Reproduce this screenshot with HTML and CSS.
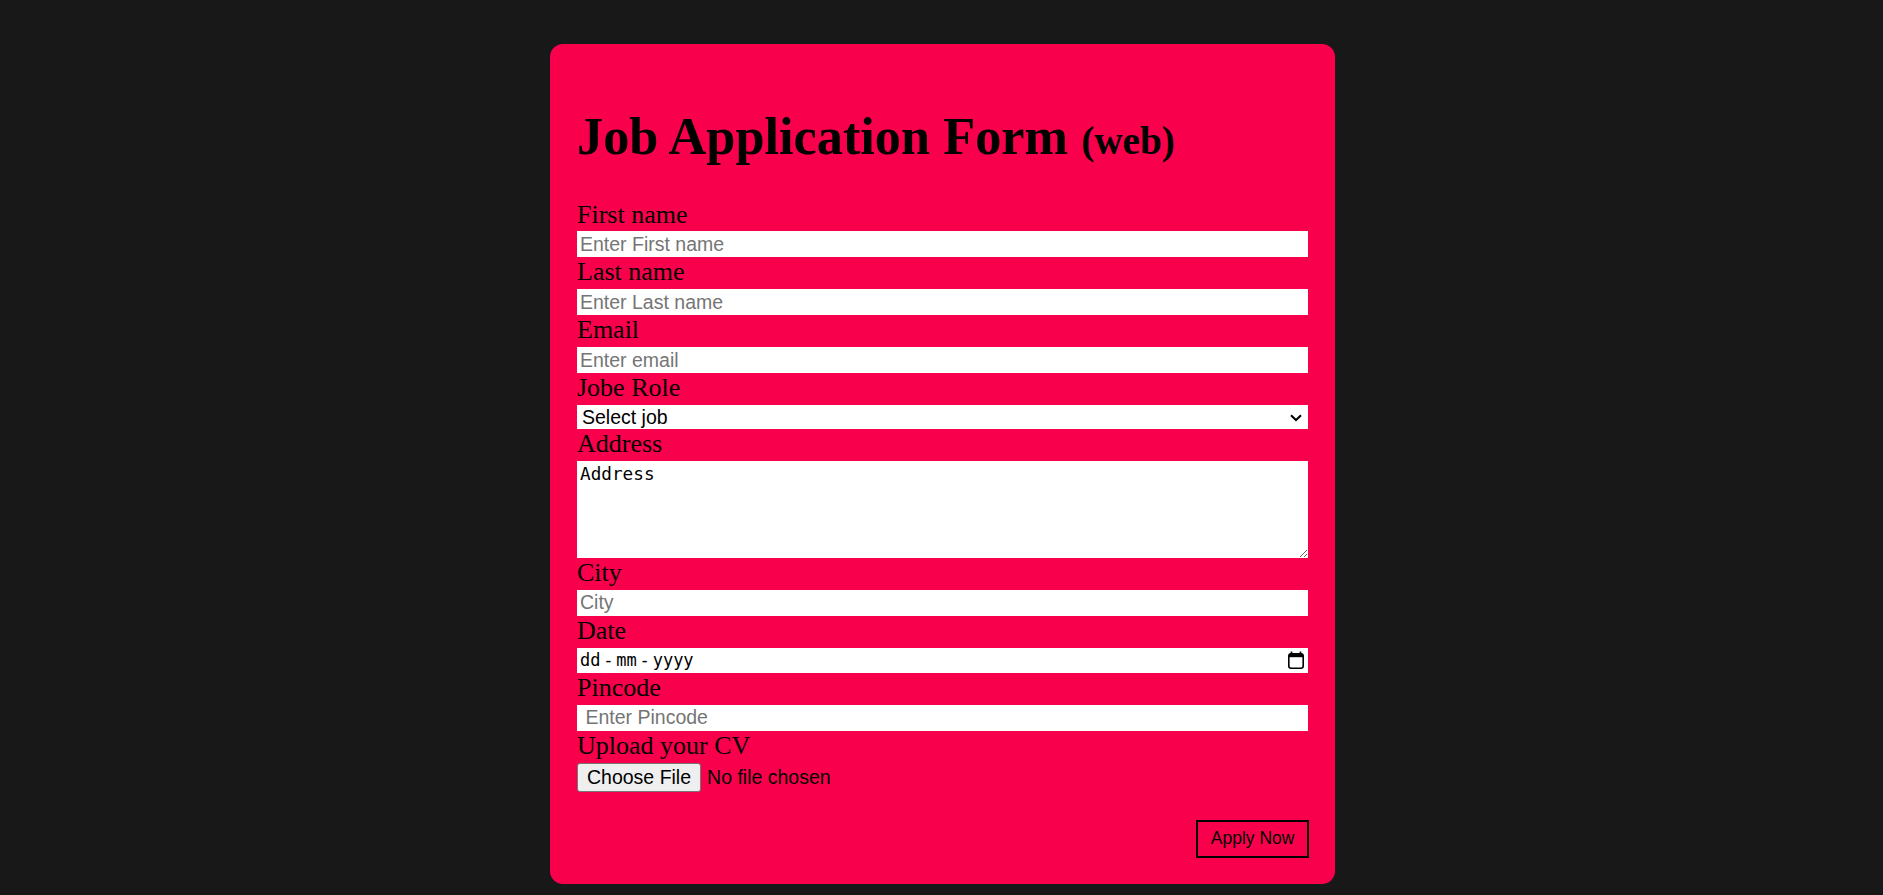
FILE: index.html
```html
<!DOCTYPE html>
<html lang="en">
<head>
<meta charset="utf-8">
<title>Job Application Form</title>
<link rel="stylesheet" href="styles.css">
</head>
<body>
<div class="card">
  <h1 class="title">Job Application Form <span class="title-sub">(web)</span></h1>
  <form class="form">
    <label class="label" for="fname">First name</label>
    <input class="field" id="fname" type="text" placeholder="Enter First name">
    <label class="label" for="lname">Last name</label>
    <input class="field" id="lname" type="text" placeholder="Enter Last name">
    <label class="label" for="email">Email</label>
    <input class="field" id="email" type="text" placeholder="Enter email">
    <label class="label" for="role">Jobe Role</label>
    <div class="select-wrap">
      <select class="select" id="role">
        <option>Select job</option>
      </select>
      <svg class="chevron" width="12" height="8" viewBox="0 0 12 8"><path d="M1 1.2 L6 6 L11 1.2" fill="none" stroke="#000" stroke-width="2"/></svg>
    </div>
    <label class="label" for="addr">Address</label>
    <textarea class="area" id="addr">Address</textarea>
    <label class="label" for="city">City</label>
    <input class="field" id="city" type="text" placeholder="City">
    <label class="label">Date</label>
    <div class="date-field">
      <span class="date-text"><span>dd</span><span class="sep">-</span><span>mm</span><span class="sep">-</span><span>yyyy</span></span>
      <svg class="cal" width="16" height="18" viewBox="0 0 16 18">
        <path d="M3.5 0.5v3.5 M12.5 0.5v3.5" stroke="#000" stroke-width="1.6"/>
        <rect x="0.8" y="2.8" width="14.4" height="14.4" rx="2.2" fill="none" stroke="#000" stroke-width="1.6"/>
        <rect x="1" y="3" width="14" height="3.2" fill="#000"/>
      </svg>
    </div>
    <label class="label" for="pin">Pincode</label>
    <input class="field" id="pin" type="text" placeholder=" Enter Pincode">
    <label class="label" for="cv">Upload your CV</label>
    <input class="file" id="cv" type="file">
    <div class="actions">
      <button class="apply" type="button">Apply Now</button>
    </div>
  </form>
</div>
</body>
</html>
```

FILE: styles.css
```css
html, body {
  margin: 0;
  padding: 0;
}

body {
  background: #181818;
  font-family: "Liberation Serif", "Times New Roman", serif;
  color: #000;
  padding-left: 2px;
}

.card {
  width: 785px;
  box-sizing: border-box;
  margin: 44px auto 0;
  padding: 27px 27px 26px;
  background: #f9004d;
  border-radius: 13px;
}

.title {
  font-size: 52.3px;
  font-weight: bold;
  line-height: normal;
  margin: 34.5px 0 34px;
}

.title-sub {
  font-size: 0.75em;
}

.form {
  display: flex;
  flex-direction: column;
  margin: 0;
}

.label {
  display: block;
  font-size: 26px;
  line-height: 30px;
  height: 30px;
}

.field {
  display: block;
  width: 100%;
  height: 26px;
  box-sizing: border-box;
  margin: 1.9px 0 0;
  padding: 0 3px;
  border: none;
  outline: none;
  background: #fff;
  font-family: "Liberation Sans", Arial, sans-serif;
  font-size: 19.5px;
  color: #000;
}

.field::placeholder {
  color: #757575;
}

.select-wrap {
  position: relative;
  margin-top: 1.9px;
  height: 24px;
}

.select {
  display: block;
  width: 100%;
  height: 24px;
  box-sizing: border-box;
  margin: 0;
  padding: 0 5px;
  border: none;
  outline: none;
  border-radius: 0;
  background: #fff;
  appearance: none;
  -webkit-appearance: none;
  font-family: "Liberation Sans", Arial, sans-serif;
  font-size: 19.5px;
  color: #000;
}

.chevron {
  position: absolute;
  right: 6px;
  top: 8.5px;
  pointer-events: none;
}

.area {
  display: block;
  width: 100%;
  height: 97px;
  box-sizing: border-box;
  margin: 1.9px 0 0;
  padding: 3px;
  border: none;
  outline: none;
  background: #fff;
  font-family: "DejaVu Sans Mono", monospace;
  font-size: 17.7px;
  color: #000;
}

.date-field {
  display: flex;
  align-items: center;
  justify-content: space-between;
  height: 25px;
  box-sizing: border-box;
  margin-top: 1.9px;
  padding: 0 4px 0 3px;
  background: #fff;
}

.date-text {
  display: flex;
  font-family: "DejaVu Sans Mono", monospace;
  font-size: 17px;
  color: #000;
}

.sep {
  margin: 0 2.8px;
}

.cal {
  display: block;
}

.file {
  display: block;
  margin: 1.9px 0 0;
  padding: 0;
  font-family: "Liberation Sans", Arial, sans-serif;
  font-size: 19.5px;
  color: #000;
}

.file::file-selector-button {
  font: inherit;
  color: #000;
  height: 29px;
  padding: 0 9px;
  margin: 0 6px 0 0;
  border: 1px solid #767676;
  border-radius: 3px;
  background: #efefef;
}

.actions {
  display: flex;
  justify-content: flex-end;
  margin-top: 28px;
  margin-right: -1px;
}

.apply {
  height: 38px;
  box-sizing: border-box;
  padding: 0 12.5px;
  border: 2px solid #000;
  background: transparent;
  font-family: "Liberation Sans", Arial, sans-serif;
  font-size: 17.5px;
  color: #000;
  cursor: pointer;
}
```
